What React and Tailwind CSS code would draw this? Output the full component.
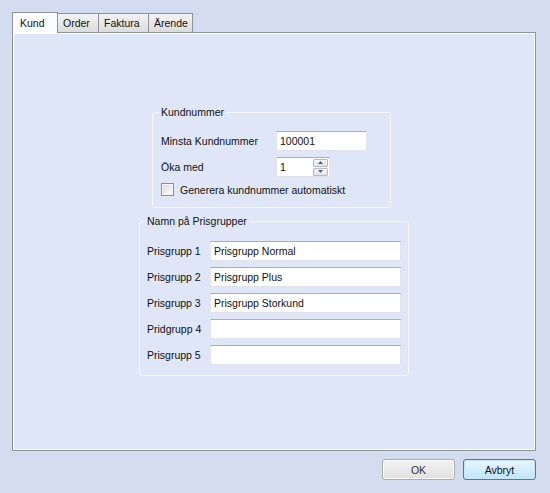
import React from "react";

const tabs = ["Kund", "Order", "Faktura", "Ärende"];
const tabWidths = ["w-[46px]", "w-[41px]", "w-[50px]", "w-[44px]"];

const prisgrupper = [
  { label: "Prisgrupp 1", value: "Prisgrupp Normal" },
  { label: "Prisgrupp 2", value: "Prisgrupp Plus" },
  { label: "Prisgrupp 3", value: "Prisgrupp Storkund" },
  { label: "Pridgrupp 4", value: "" },
  { label: "Prisgrupp 5", value: "" },
];

function TextBox({ value, className }) {
  return (
    <div
      className={`h-[20px] bg-white border border-[#e2e3ea] border-t-[#abadb3] flex items-center pl-[3px] ${className}`}
    >
      {value}
    </div>
  );
}

function Spin() {
  return (
    <div className="h-[20px] w-[54px] bg-white border border-[#e2e3ea] border-t-[#abadb3] flex items-center pl-[3px] pr-[1px]">
      <span className="flex-1">1</span>
      <div className="flex flex-col gap-[1px] w-[15px]">
        <div className="h-[8px] border border-[#b5b9c2] rounded-[1px] bg-gradient-to-b from-[#f7f7f7] to-[#e2e4e8] flex items-center justify-center">
          <svg width="5" height="3" viewBox="0 0 5 3">
            <path d="M0 3 L2.5 0 L5 3 Z" fill="#4d6185" />
          </svg>
        </div>
        <div className="h-[8px] border border-[#b5b9c2] rounded-[1px] bg-gradient-to-b from-[#f7f7f7] to-[#e2e4e8] flex items-center justify-center">
          <svg width="5" height="3" viewBox="0 0 5 3">
            <path d="M0 0 L2.5 3 L5 0 Z" fill="#4d6185" />
          </svg>
        </div>
      </div>
    </div>
  );
}

export default function App() {
  return (
    <div className="w-[550px] h-[493px] bg-[#d4dcef] text-[#111] text-[10.5px] leading-[14px] font-['Liberation_Sans',Arial,sans-serif] pt-[12px] pl-[12px] pr-[14px] flex flex-col">
      {/* tabs */}
      <div className="flex items-end h-[21px] relative z-10 -mb-[1px]">
        {tabs.map((t, i) => (
          <div
            key={t}
            className={
              i === 0
                ? `${tabWidths[i]} h-[21px] bg-[#fbfcfe] border border-[#8d939d] border-b-0 pl-[7px] pt-[3px]`
                : `${tabWidths[i]} h-[19px] mb-[1px] bg-gradient-to-b from-[#f3f3f3] to-[#dcdcdc] border border-[#8d939d] border-l-0 border-b-0 pl-[5px] pt-[2px]`
            }
          >
            {t}
          </div>
        ))}
      </div>

      {/* panel */}
      <div className="w-[524px] h-[419px] bg-[#dee6f7] border border-[#8d939d] shadow-[inset_1px_1px_0_#ffffff,inset_-1px_-1px_0_#ffffff] flex flex-col">
        <fieldset className="ml-[139px] mt-[72px] w-[239px] border border-[#f6f8fc] rounded-[3px] pb-[11px] pl-[8px]">
          <legend className="ml-[-2px] px-[2px]">Kundnummer</legend>
          <div className="flex items-center h-[20px] mt-[12px]">
            <span className="w-[115px]">Minsta Kundnummer</span>
            <TextBox value="100001" className="w-[91px]" />
          </div>
          <div className="flex items-center h-[20px] mt-[6px]">
            <span className="w-[115px]">Öka med</span>
            <Spin />
          </div>
          <label className="flex items-center gap-[6px] h-[13px] mt-[6px]">
            <span className="w-[13px] h-[13px] border border-[#8e8f8f] bg-gradient-to-br from-[#dcdcdc] to-[#fbfbfb] shadow-[inset_0_0_0_1px_#f4f4f4]" />
            <span>Generera kundnummer automatiskt</span>
          </label>
        </fieldset>

        <fieldset className="ml-[126px] mt-[6px] w-[270px] border border-[#f6f8fc] rounded-[3px] pb-[10px] pl-[7px]">
          <legend className="ml-[-2px] px-[2px]">Namn på Prisgrupper</legend>
          <div className="flex flex-col gap-[6px] mt-[13px]">
            {prisgrupper.map((p) => (
              <div key={p.label} className="flex items-center h-[20px]">
                <span className="w-[63px]">{p.label}</span>
                <TextBox value={p.value} className="w-[191px]" />
              </div>
            ))}
          </div>
        </fieldset>
      </div>

      {/* buttons */}
      <div className="flex justify-end gap-[8px] mt-[8px]">
        <button className="w-[73px] h-[21px] rounded-[3px] border border-[#acacac] bg-gradient-to-b from-[#f2f2f2] to-[#e0e0e0] text-[#333] shadow-[inset_0_0_0_1px_#fcfcfc]">
          OK
        </button>
        <button className="w-[73px] h-[21px] rounded-[3px] border border-[#3c7fb1] bg-gradient-to-b from-[#eaf6fd] to-[#bee6fd] shadow-[inset_0_0_0_1px_#c8e8fa]">
          Avbryt
        </button>
      </div>
    </div>
  );
}
